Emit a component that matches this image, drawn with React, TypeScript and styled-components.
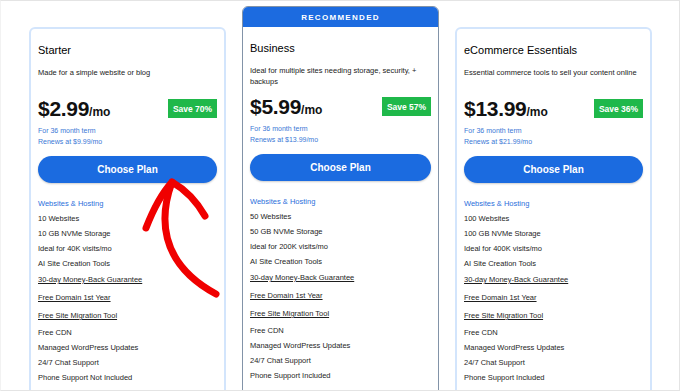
import React from 'react';
import styled, {createGlobalStyle} from "styled-components";

const GlobalStyle = createGlobalStyle`
    body {
        margin: 0;
        background: #fff;
        font-family: "Liberation Sans", Arial, sans-serif;
    }
`;

type Plan = {
    name: string;
    desc: string;
    price: string;
    save: string;
    renews: string;
    sites: string;
    storage: string;
    visits: string;
    phone: string;
    recommended?: boolean;
};

const plans: Plan[] = [
    {
        name: "Starter",
        desc: "Made for a simple website or blog",
        price: "$2.99",
        save: "Save 70%",
        renews: "Renews at $9.99/mo",
        sites: "10 Websites",
        storage: "10 GB NVMe Storage",
        visits: "Ideal for 40K visits/mo",
        phone: "Phone Support Not Included",
    },
    {
        name: "Business",
        desc: "Ideal for multiple sites needing storage, security, + backups",
        price: "$5.99",
        save: "Save 57%",
        renews: "Renews at $13.99/mo",
        sites: "50 Websites",
        storage: "50 GB NVMe Storage",
        visits: "Ideal for 200K visits/mo",
        phone: "Phone Support Included",
        recommended: true,
    },
    {
        name: "eCommerce Essentials",
        desc: "Essential commerce tools to sell your content online",
        price: "$13.99",
        save: "Save 36%",
        renews: "Renews at $21.99/mo",
        sites: "100 Websites",
        storage: "100 GB NVMe Storage",
        visits: "Ideal for 400K visits/mo",
        phone: "Phone Support Included",
    },
];

const PlanCard = ({plan}: { plan: Plan }) => {
    return (
        <Card recommended={plan.recommended}>
            {plan.recommended && <Ribbon>RECOMMENDED</Ribbon>}
            <Body>
                <Title>{plan.name}</Title>
                <Desc>{plan.desc}</Desc>
                <PriceRow>
                    <Price>{plan.price}<Per>/mo</Per></Price>
                    <Badge>{plan.save}</Badge>
                </PriceRow>
                <Terms>
                    <div>For 36 month term</div>
                    <div>{plan.renews}</div>
                </Terms>
                <ChooseButton>Choose Plan</ChooseButton>
                <Section>Websites &amp; Hosting</Section>
                <Features>
                    <Feature>{plan.sites}</Feature>
                    <Feature>{plan.storage}</Feature>
                    <Feature>{plan.visits}</Feature>
                    <Feature>AI Site Creation Tools</Feature>
                    <Feature linked>30-day Money-Back Guarantee</Feature>
                    <Feature linked>Free Domain 1st Year</Feature>
                    <Feature linked>Free Site Migration Tool</Feature>
                    <Feature>Free CDN</Feature>
                    <Feature>Managed WordPress Updates</Feature>
                    <Feature>24/7 Chat Support</Feature>
                    <Feature>{plan.phone}</Feature>
                </Features>
            </Body>
        </Card>
    );
};

const App = () => {
    return (
        <>
            <GlobalStyle/>
            <Frame>
                <Cards>
                    {plans.map(p => <PlanCard key={p.name} plan={p}/>)}
                </Cards>
                <Arrow viewBox="0 0 680 391" width="680" height="391">
                    <g fill="none" stroke="#f00000" strokeWidth="7" strokeLinecap="round" strokeLinejoin="round">
                        <path d="M172 182 C 160 215, 157 262, 216 294"/>
                        <path d="M146 228 C 153 210, 162 193, 172 182 C 186 190, 197 202, 205 216"/>
                    </g>
                </Arrow>
            </Frame>
        </>
    );
};

export default App;

const Frame = styled.div`
    position: relative;
    width: 680px;
    height: 391px;
    box-sizing: border-box;
    border: 1px solid #e4e4e4;
    border-left-color: #f2f2f2;
    overflow: hidden;
    background: #fff;
`;

const Cards = styled.div`
    display: flex;
    align-items: flex-start;
    gap: 16px;
    padding: 5px 0 0 28px;
`;

const Card = styled.div<{ recommended?: boolean }>`
    width: 197px;
    box-sizing: border-box;
    margin-top: ${p => p.recommended ? "0" : "21px"};
    border: ${p => p.recommended ? "1.5px solid #8293a8" : "2px solid #d3e5fc"};
    border-radius: 6px;
    overflow: hidden;
    padding-bottom: 30px;
    background: #fff;
`;

const Ribbon = styled.div`
    height: 20px;
    background: #1c6be0;
    color: #fff;
    font-size: 8px;
    font-weight: 700;
    letter-spacing: 1.3px;
    display: flex;
    align-items: center;
    justify-content: center;
`;

const Body = styled.div`
    padding: 14px 7px 0;
`;

const Title = styled.div`
    font-size: 11px;
    line-height: 14px;
    font-weight: 500;
    color: #000;
`;

const Desc = styled.div`
    margin-top: 10px;
    min-height: 22px;
    font-size: 7.5px;
    line-height: 11px;
    color: #222;
`;

const PriceRow = styled.div`
    margin-top: 10px;
    display: flex;
    align-items: center;
    justify-content: space-between;
    height: 19px;
`;

const Price = styled.div`
    font-size: 21px;
    font-weight: 700;
    color: #111;
    letter-spacing: -0.3px;
`;

const Per = styled.span`
    font-size: 12px;
    font-weight: 600;
    letter-spacing: 0;
`;

const Badge = styled.div`
    width: 49px;
    height: 19px;
    display: flex;
    align-items: center;
    justify-content: center;
    background: #1fb84a;
    color: #fff;
    font-size: 8.5px;
    font-weight: 700;
`;

const Terms = styled.div`
    margin-top: 7px;
    font-size: 7px;
    line-height: 11px;
    color: #3b78d6;
`;

const ChooseButton = styled.button`
    display: block;
    margin-top: 9px;
    width: 100%;
    height: 27px;
    border: none;
    border-radius: 14px;
    background: #1b6be0;
    color: #fff;
    font-family: inherit;
    font-size: 10px;
    font-weight: 700;
    box-shadow: 0 1px 2px rgba(0, 0, 0, 0.2);
`;

const Section = styled.div`
    margin-top: 13px;
    font-size: 7.5px;
    line-height: 15px;
    color: #2a6fdb;
`;

const Features = styled.ul`
    list-style: none;
    margin: 0;
    padding: 0;
`;

const Feature = styled.li<{ linked?: boolean }>`
    font-size: 7.5px;
    line-height: ${p => p.linked ? "18px" : "15px"};
    color: #1e1e1e;
    text-decoration: ${p => p.linked ? "underline" : "none"};
`;

const Arrow = styled.svg`
    position: absolute;
    left: -1px;
    top: -1px;
    pointer-events: none;
`;
